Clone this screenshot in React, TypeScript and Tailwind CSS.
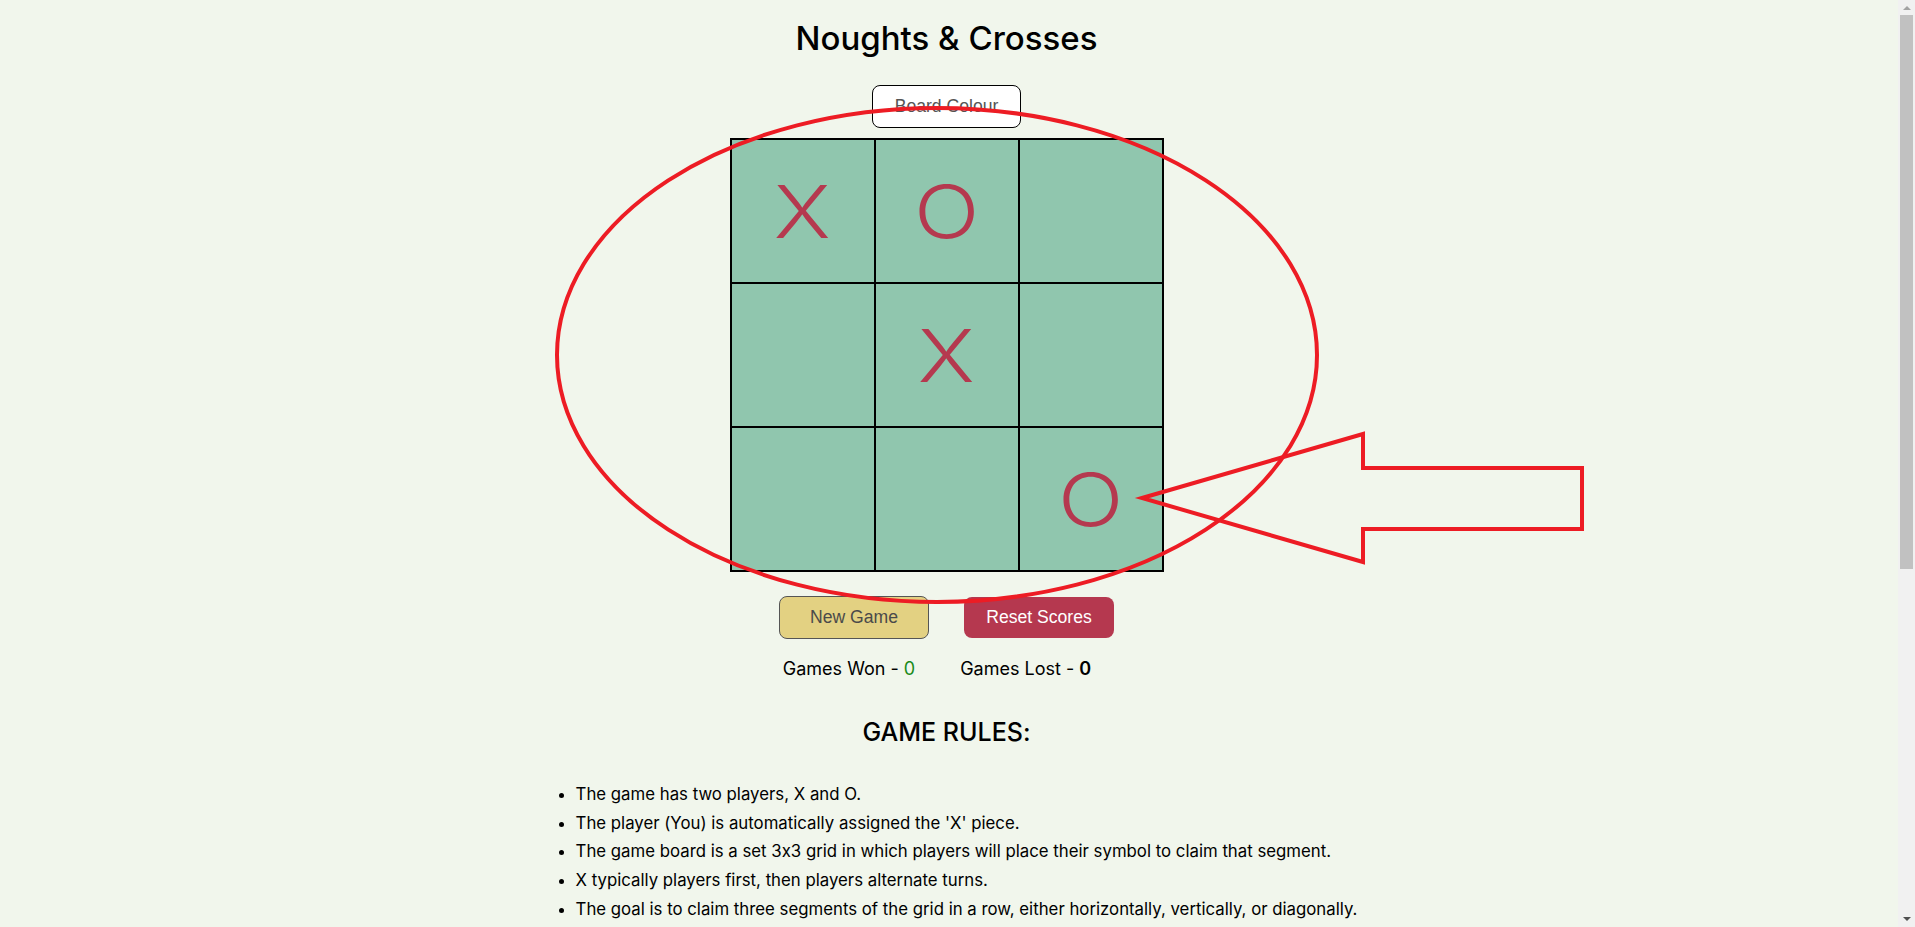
import { useState } from 'react';

const rules = [
  'The game has two players, X and O.',
  "The player (You) is automatically assigned the 'X' piece.",
  'The game board is a set 3x3 grid in which players will place their symbol to claim that segment.',
  'X typically players first, then players alternate turns.',
  'The goal is to claim three segments of the grid in a row, either horizontally, vertically, or diagonally.',
];

export default function App() {
  const [board] = useState<string[]>(['X', 'O', '', '', 'X', '', '', '', 'O']);
  const [won] = useState(0);
  const [lost] = useState(0);

  return (
    <div className="flex h-[927px] bg-[#f1f6ec]">
      <div className="h-full flex-1 overflow-y-auto">
        <div className="relative min-h-[1494px] pr-[5px] text-black font-['Inter','Noto_Sans',sans-serif] [font-feature-settings:'calt'_0]">
          <h1 className="pt-[14px] text-center text-[33px] leading-[48px] font-medium">Noughts &amp; Crosses</h1>

          <div className="mt-[23px] flex justify-center">
            <button className="h-[43px] w-[149px] rounded-lg border border-black bg-white text-[17.6px] text-[#555] font-['Liberation_Sans',Arial,sans-serif]">
              Board Colour
            </button>
          </div>

          {/* Board */}
          <div className="mt-[10px] flex justify-center">
            <div className="grid grid-cols-[repeat(3,142px)] grid-rows-[repeat(3,142px)] gap-[2px] bg-black p-[2px]">
              {board.map((cell, idx) => (
                <div
                  key={idx}
                  className="flex items-center justify-center bg-[#90c6ae] text-[73px] font-light leading-none text-[#b5394f]"
                >
                  <span className="inline-block scale-x-[1.18]">{cell}</span>
                </div>
              ))}
            </div>
          </div>

          {/* Buttons */}
          <div className="mt-[24px] flex items-center justify-center gap-[35px] font-['Liberation_Sans',Arial,sans-serif] text-[17.6px]">
            <button className="h-[43px] w-[150px] rounded-lg border border-[#555] bg-[#e3d182] text-[#4a4a4a]">
              New Game
            </button>
            <button className="h-[41px] w-[150px] rounded-lg bg-[#b5384f] text-white">Reset Scores</button>
          </div>

          {/* Scores */}
          <div className="mt-[18px] flex justify-center gap-[45px] pr-[19px] text-[18px] leading-[24px]">
            <span>
              Games Won - <span className="text-[#1a8a1a]">{won}</span>
            </span>
            <span>
              Games Lost - <span className="font-semibold">{lost}</span>
            </span>
          </div>

          <h2 className="mt-[35px] text-center text-[25px] leading-[32px] font-medium">GAME RULES:</h2>

          <ul className="mx-auto mt-[32px] w-fit list-disc pl-10 text-[16.8px] leading-[28.7px]">
            {rules.map((rule, idx) => (
              <li key={idx}>{rule}</li>
            ))}
          </ul>

          {/* red annotation drawn over the board */}
          <svg className="pointer-events-none absolute left-0 top-0" width="1898" height="927" fill="none">
            <ellipse cx="937" cy="355" rx="380" ry="247" stroke="#ed1c24" strokeWidth="4" />
            <polygon
              points="1142,498 1363,434 1363,468 1582,468 1582,529 1363,529 1363,562"
              stroke="#ed1c24"
              strokeWidth="4"
              strokeLinejoin="miter"
            />
          </svg>
        </div>
      </div>

      {/* scrollbar */}
      <div className="flex w-[17px] flex-col bg-[#f1f1f1]">
        <div className="flex h-[15px] items-center justify-center">
          <div className="h-0 w-0 border-x-[4px] border-b-[4px] border-x-transparent border-b-[#a3a3a3]" />
        </div>
        <div className="flex-1">
          <div className="mx-[2px] h-[554px] bg-[#c1c1c1]" />
        </div>
        <div className="flex h-[17px] items-center justify-center">
          <div className="h-0 w-0 border-x-[4px] border-t-[4px] border-x-transparent border-t-[#505050]" />
        </div>
      </div>
    </div>
  );
}
